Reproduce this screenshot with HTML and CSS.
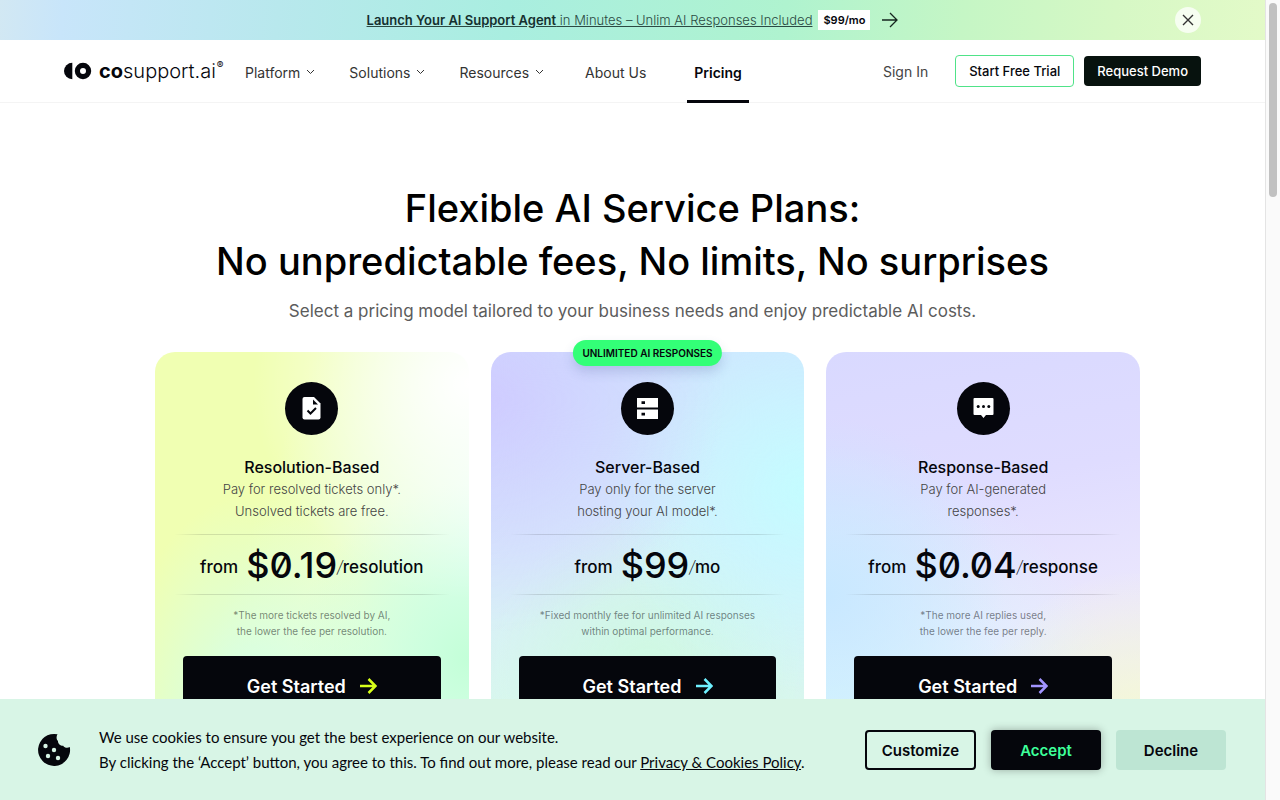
FILE: index.html
```html
<!DOCTYPE html>
<html lang="en">
<head>
    <meta charset="UTF-8">
    <meta name="viewport" content="width=device-width, initial-scale=1.0">
    <title>Pricing | cosupport.ai</title>
    <link rel="stylesheet" href="styles.css">
</head>
<body>
<div class="window">
    <div class="page">
        <!-- Promo banner -->
        <div class="banner">
            <a href="#" class="banner-link">
                <span class="banner-text"><b>Launch Your AI Support Agent</b> in Minutes – Unlim AI Responses Included</span>
                <span class="banner-price">$99/mo</span>
                <svg width="16" height="16" viewBox="0 0 16 16" fill="none" stroke="#16251f" stroke-width="1.3"><path d="M0 8h15M8 1l7 7-7 7"/></svg>
            </a>
            <button class="banner-close" aria-label="Close">
                <svg width="12" height="12" viewBox="0 0 12 12" fill="none" stroke="#333" stroke-width="1.4"><path d="M1 1l10 10M11 1L1 11"/></svg>
            </button>
        </div>

        <!-- Header -->
        <header class="header">
            <a href="#" class="logo">
                <svg width="28" height="18" viewBox="0 0 28 18">
                    <path d="M8.300 .7v16.600A8.300 8.300 0 0 1 8.300 .7z" fill="#05060c"/>
                    <circle cx="19" cy="9" r="5.600" fill="none" stroke="#05060c" stroke-width="5.200"/>
                </svg>
                <span class="logo-text"><b>co</b>support.ai</span><sup>®</sup>
            </a>
            <nav class="nav">
                <a href="#">Platform <svg width="9" height="6" viewBox="0 0 9 6"><path d="M1 1l3.500 3.500L8 1"/></svg></a>
                <a href="#">Solutions <svg width="9" height="6" viewBox="0 0 9 6"><path d="M1 1l3.500 3.500L8 1"/></svg></a>
                <a href="#">Resources <svg width="9" height="6" viewBox="0 0 9 6"><path d="M1 1l3.500 3.500L8 1"/></svg></a>
                <a href="#" class="nav-plain">About Us</a>
                <a href="#" class="nav-plain active">Pricing</a>
            </nav>
            <div class="actions">
                <a href="#" class="sign-in">Sign In</a>
                <a href="#" class="btn-trial">Start Free Trial</a>
                <a href="#" class="btn-demo">Request Demo</a>
            </div>
        </header>

        <!-- Plans -->
        <main class="main">
            <h1>Flexible AI Service Plans:<br>No unpredictable fees, No limits, No surprises</h1>
            <p class="subtitle">Select a pricing model tailored to your business needs and enjoy predictable AI costs.</p>

            <div class="plans">
                <section class="plan plan-resolution">
                    <div class="plan-icon">
                        <svg width="27" height="27" viewBox="0 0 27 27">
                            <path d="M6.500 2H16l6.500 6.500v14a2 2 0 0 1-2 2h-14a2 2 0 0 1-2-2V4a2 2 0 0 1 2-2z" fill="#fff"/>
                            <path d="M15 4.500v5h5z" fill="#05060c"/>
                            <path d="M9.500 15.500l3 3 5.500-5.500" fill="none" stroke="#05060c" stroke-width="2"/>
                        </svg>
                    </div>
                    <h2>Resolution-Based</h2>
                    <p class="plan-text">Pay for resolved tickets only*.<br>Unsolved tickets are free.</p>
                    <div class="price"><span>from</span><strong>$0.19</strong><span><i>/</i>resolution</span></div>
                    <p class="plan-note">*The more tickets resolved by AI,<br>the lower the fee per resolution.</p>
                    <a href="#" class="plan-btn">Get Started <svg width="17" height="16" viewBox="0 0 17 16"><path d="M0 8h15M8.500 1l7 7-7 7"/></svg></a>
                </section>

                <section class="plan plan-server">
                    <span class="badge">UNLIMITED AI RESPONSES</span>
                    <div class="plan-icon">
                        <svg width="27" height="27" viewBox="0 0 27 27">
                            <path d="M3 3h21v9.500H3zM3 14.500h21V24H3z" fill="#fff"/>
                            <path d="M7.500 6.300h3.500v2.700H7.500zM7.500 17.800h3.500v2.700H7.500z" fill="#05060c"/>
                        </svg>
                    </div>
                    <h2>Server-Based</h2>
                    <p class="plan-text">Pay only for the server<br>hosting your AI model*.</p>
                    <div class="price"><span>from</span><strong>$99</strong><span><i>/</i>mo</span></div>
                    <p class="plan-note">*Fixed monthly fee for unlimited AI responses<br>within optimal performance.</p>
                    <a href="#" class="plan-btn">Get Started <svg width="17" height="16" viewBox="0 0 17 16"><path d="M0 8h15M8.500 1l7 7-7 7"/></svg></a>
                </section>

                <section class="plan plan-response">
                    <div class="plan-icon">
                        <svg width="27" height="27" viewBox="0 0 27 27">
                            <path d="M4.500 3h18a1 1 0 0 1 1 1v15a1 1 0 0 1-1 1H16l-2.500 3L11 20H4.500a1 1 0 0 1-1-1V4a1 1 0 0 1 1-1z" fill="#fff"/>
                            <circle cx="8.200" cy="11.500" r="1.500" fill="#05060c"/>
                            <circle cx="13.500" cy="11.500" r="1.500" fill="#05060c"/>
                            <circle cx="18.800" cy="11.500" r="1.500" fill="#05060c"/>
                        </svg>
                    </div>
                    <h2>Response-Based</h2>
                    <p class="plan-text">Pay for AI-generated<br>responses*.</p>
                    <div class="price"><span>from</span><strong>$0.04</strong><span><i>/</i>response</span></div>
                    <p class="plan-note">*The more AI replies used,<br>the lower the fee per reply.</p>
                    <a href="#" class="plan-btn">Get Started <svg width="17" height="16" viewBox="0 0 17 16"><path d="M0 8h15M8.500 1l7 7-7 7"/></svg></a>
                </section>
            </div>
        </main>

        <!-- Cookie bar -->
        <div class="cookies">
            <svg class="cookie-icon" width="34" height="34" viewBox="0 0 34 34">
                <path d="M20.500 1.300A16 16 0 1 0 32.800 14c-2.300 1.400-5.300.9-6.600-1.300-3 .1-5.300-2-5.200-4.700-1.700-1.600-1.900-4.700-.5-6.700z" fill="#05060c"/>
                <g fill="#d8f5e6">
                    <circle cx="8.500" cy="13" r="2.200"/>
                    <circle cx="17" cy="17" r="2.200"/>
                    <circle cx="11" cy="23" r="2.200"/>
                    <circle cx="21" cy="25" r="2.200"/>
                </g>
            </svg>
            <p>We use cookies to ensure you get the best experience on our website.<br>By clicking the ‘Accept’ button, you agree to this. To find out more, please read our <a href="#">Privacy &amp; Cookies Policy</a>.</p>
            <div class="cookie-buttons">
                <button class="btn-customize">Customize</button>
                <button class="btn-accept">Accept</button>
                <button class="btn-decline">Decline</button>
            </div>
        </div>
    </div>
    <div class="scrollbar"><div class="thumb"></div></div>
</div>
</body>
</html>
```
FILE: styles.css
```css
* {
    box-sizing: border-box;
}

body {
    margin: 0;
    font-family: Inter, "Liberation Sans", sans-serif;
    color: #05060c;
    background: #fff;
}

a {
    color: inherit;
    text-decoration: none;
}

button {
    font-family: inherit;
    cursor: pointer;
}

.window {
    display: flex;
    height: 100vh;
    overflow: hidden;
}

.page {
    flex: 1;
    min-width: 0;
    display: flex;
    flex-direction: column;
}

.scrollbar {
    width: 15px;
    padding: 3px;
    background: #fafafa;
    border-left: 1px solid #e4e4e4;
}

.thumb {
    width: 8px;
    height: 194px;
    border-radius: 4px;
    background: #c1c1c1;
}

/* Banner */
.banner {
    flex: none;
    display: flex;
    align-items: center;
    height: 40px;
    padding: 0 64px;
    background: linear-gradient(95deg, #d2e8f3 0%, #c8e5fa 5%, #b8e8ed 22%, #a9eee0 40%, #aff3cf 62%, #c5f6c5 76%, #d6f8c5 88%, #e3fac8 100%);
}

.banner-link {
    flex: 1;
    display: flex;
    align-items: center;
    justify-content: center;
    padding-left: 26px;
}

.banner-text {
    font-size: 13px;
    font-weight: 300;
    color: #2b4a43;
    text-decoration: underline;
}

.banner-text b {
    font-weight: 600;
    color: #15302f;
}

.banner-price {
    margin: 0 12px 0 6px;
    padding: 0 5px;
    background: #fff;
    font-size: 11px;
    font-weight: 600;
    line-height: 20px;
}

.banner-close {
    display: flex;
    align-items: center;
    justify-content: center;
    width: 26px;
    height: 26px;
    padding: 0;
    border: none;
    border-radius: 50%;
    background: rgba(255, 255, 255, 0.75);
}

/* Header */
.header {
    flex: none;
    display: flex;
    align-items: center;
    height: 63px;
    padding: 0 64px;
    border-bottom: 1px solid #f4f4f4;
}

.logo {
    display: flex;
    align-items: center;
    width: 181px;
}

.logo-text {
    margin-left: 7px;
    font-size: 20px;
    font-weight: 300;
}

.logo-text b {
    font-weight: 700;
}

.logo sup {
    align-self: flex-start;
    margin-left: 1px;
    font-size: 10px;
}

.nav {
    flex: 1;
    display: flex;
    align-self: stretch;
    gap: 34px;
    margin-bottom: -1px;
    padding-top: 1px;
    font-size: 14px;
    color: #333;
}

.nav a {
    display: flex;
    align-items: center;
    gap: 6px;
}

.nav svg {
    fill: none;
    stroke: #333;
}

.nav .nav-plain {
    padding: 0 7px;
}

.nav .active {
    border-top: 3px solid transparent;
    border-bottom: 3px solid #05060c;
    color: #05060c;
    font-weight: 600;
}

.actions {
    display: flex;
    align-items: center;
    gap: 10px;
    font-size: 13px;
    font-weight: 500;
}

.sign-in {
    margin-right: 17px;
    font-size: 14px;
    font-weight: 400;
    color: #444;
}

.btn-trial {
    padding: 0 13px;
    border: 1px solid #4fe388;
    border-radius: 4px;
    line-height: 30px;
}

.btn-demo {
    padding: 0 13px;
    border-radius: 4px;
    background: #07120e;
    color: #fff;
    line-height: 30px;
}

/* Plans */
.main {
    flex: 1;
    min-height: 0;
    overflow: hidden;
    padding-top: 79px;
    text-align: center;
}

h1 {
    margin: 0;
    font-size: 38px;
    font-weight: 500;
    line-height: 53px;
    color: #000;
}

.subtitle {
    margin: 10px 0 0;
    font-size: 17px;
    font-weight: 400;
    line-height: 26px;
    color: #5c5c5c;
}

.plans {
    display: grid;
    grid-template-columns: repeat(3, 1fr);
    gap: 22px;
    max-width: 1015px;
    margin: 28px auto 0;
    padding-left: 30px;
}

.plan {
    position: relative;
    padding: 30px 28px;
    border-radius: 20px;
}

.plan-resolution {
    background:
        radial-gradient(circle at 100% 8%, #fff 0%, rgba(255, 255, 255, 0) 45%),
        radial-gradient(circle at 100% 78%, #c3ffd8 0%, rgba(195, 255, 216, 0) 40%),
        radial-gradient(ellipse at 30% 100%, #cffff2 0%, rgba(207, 255, 242, 0) 45%),
        linear-gradient(110deg, #f0ffb2 35%, #e8fff4 85%);
}

.plan-server {
    background:
        radial-gradient(circle at 0% 12%, #cfccff 0%, rgba(207, 204, 255, 0) 50%),
        radial-gradient(circle at 100% 35%, #c4fcff 0%, rgba(196, 252, 255, 0) 50%),
        radial-gradient(circle at 50% 80%, #cff9e2 0%, rgba(207, 249, 226, 0) 45%),
        linear-gradient(180deg, #d0e4ff 0%, #d8ecfc 50%, #d8faea 100%);
}

.plan-response {
    background:
        radial-gradient(circle at 0% 62%, #c8e8ff 0%, rgba(200, 232, 255, 0) 45%),
        radial-gradient(circle at 100% 100%, #f6fad0 0%, rgba(246, 250, 208, 0) 35%),
        radial-gradient(circle at 0% 100%, #d2f8ff 0%, rgba(210, 248, 255, 0) 60%),
        linear-gradient(170deg, #d9d9ff 0%, #dfdcff 35%, #ece8fd 70%, #eef0f6 100%);
}

/* Sits over the top edge of the card */
.badge {
    position: absolute;
    top: -12px;
    left: 50%;
    transform: translateX(-50%);
    padding: 0 9px;
    border-radius: 13px;
    background: #33ff77;
    box-shadow: 0 6px 12px rgba(60, 80, 140, 0.2);
    font-size: 10px;
    font-weight: 600;
    line-height: 26px;
    white-space: nowrap;
}

.plan-icon {
    display: flex;
    align-items: center;
    justify-content: center;
    width: 53px;
    height: 53px;
    margin: 0 auto;
    border-radius: 50%;
    background: #05060c;
}

.plan h2 {
    margin: 22px 0 0;
    font-size: 16px;
    font-weight: 500;
    line-height: 21px;
}

.plan-text {
    margin: 0;
    font-size: 13px;
    font-weight: 300;
    line-height: 22px;
    color: #444;
}

.price {
    display: flex;
    align-items: center;
    justify-content: center;
    height: 61px;
    margin: 12px -8px 0;
    border: solid;
    border-width: 1px 0;
    border-image: linear-gradient(90deg, rgba(0, 0, 0, 0), rgba(0, 0, 0, 0.12) 10%, rgba(0, 0, 0, 0.12) 90%, rgba(0, 0, 0, 0)) 1;
    font-size: 17px;
    font-weight: 500;
}

.price span {
    padding-top: 4px;
}

.price strong {
    margin-left: 8px;
    font-size: 36px;
    font-weight: 500;
    font-feature-settings: "zero";
}

.price i {
    font-weight: 200;
}

.plan-note {
    margin: 12px 0 0;
    font-size: 10px;
    font-weight: 400;
    line-height: 16px;
    color: rgba(5, 6, 12, 0.5);
}

.plan-btn {
    display: flex;
    align-items: center;
    justify-content: center;
    gap: 14px;
    height: 60px;
    margin-top: 17px;
    border-radius: 4px;
    background: #05060c;
    color: #fff;
    font-size: 18px;
    font-weight: 600;
}

.plan-btn svg {
    fill: none;
    stroke-width: 2.5;
}

.plan-resolution .plan-btn svg {
    stroke: #d8ff1a;
}

.plan-server .plan-btn svg {
    stroke: #6ff0ff;
}

.plan-response .plan-btn svg {
    stroke: #a294ff;
}

/* Cookie bar */
.cookies {
    flex: none;
    display: flex;
    align-items: center;
    padding: 26px 39px 25px 37px;
    background: #d8f5e6;
}

.cookie-icon {
    flex: none;
    margin-right: 28px;
}

.cookies p {
    flex: 1;
    margin: 0;
    font-family: Lato, "Liberation Sans", sans-serif;
    font-size: 15px;
    line-height: 25px;
}

.cookies p a {
    text-decoration: underline;
}

.cookie-buttons {
    display: flex;
    gap: 15px;
}

.cookie-buttons button {
    height: 40px;
    min-width: 110px;
    padding: 0 15px;
    border: none;
    border-radius: 4px;
    font-size: 15px;
    font-weight: 600;
    color: #05060c;
}

.cookie-buttons .btn-customize {
    border: 2px solid #05060c;
    background: transparent;
}

.cookie-buttons .btn-accept {
    background: #05060c;
    box-shadow: 0 0 8px rgba(0, 0, 0, 0.3);
    color: #3dff9a;
}

.cookie-buttons .btn-decline {
    background: #bde5d3;
}
```
